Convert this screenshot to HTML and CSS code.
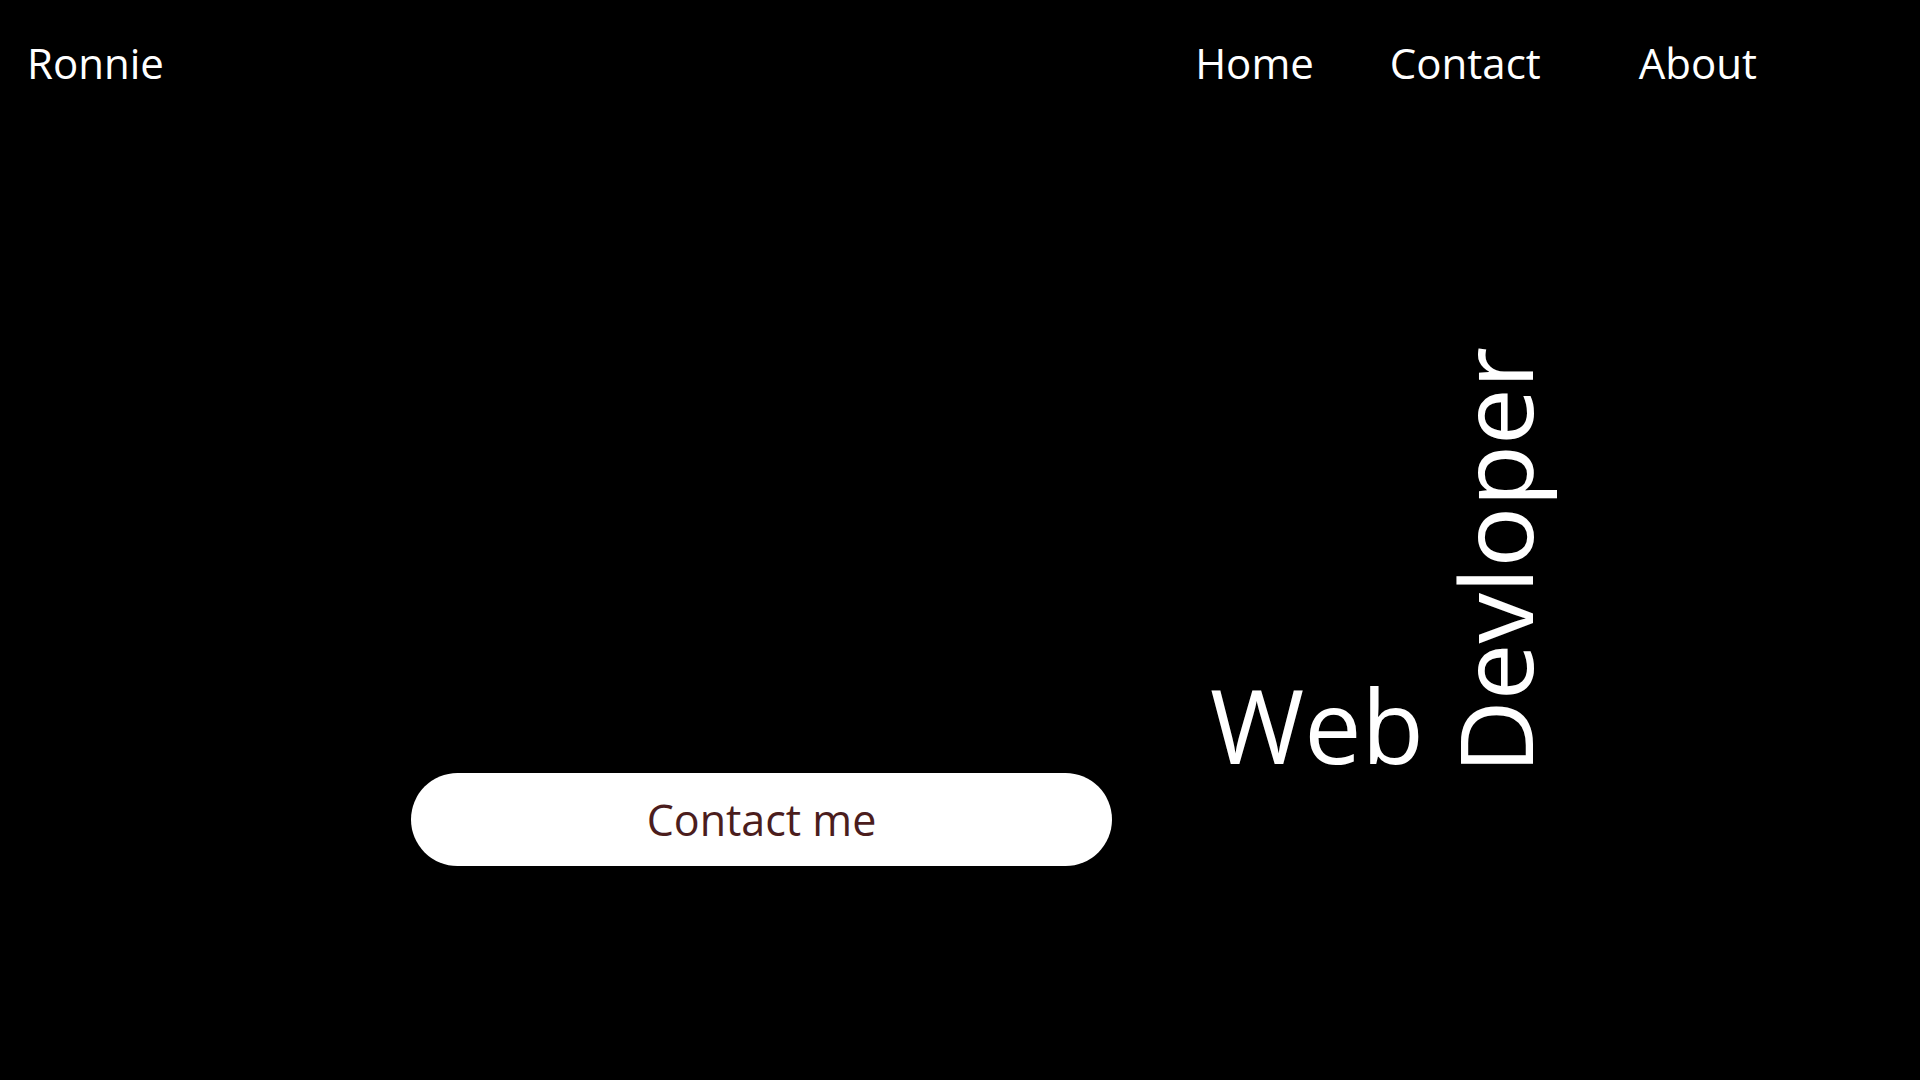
FILE: index.html
```html
<!DOCTYPE html>
<html lang="en">
<head>
<meta charset="utf-8">
<title>Ronnie</title>
<link rel="stylesheet" href="styles.css">
</head>
<body>
<header class="topbar">
  <div class="brand">Ronnie</div>
  <nav class="nav">
    <a class="nav-link" href="#">Home</a>
    <a class="nav-link" href="#">Contact</a>
    <a class="nav-link nav-link--wide" href="#">About</a>
  </nav>
</header>
<main class="hero">
  <a class="cta" href="#">Contact me</a>
  <h1 class="title">
    <span class="title-web">Web</span>
    <span class="title-dev">Devloper</span>
  </h1>
</main>
</body>
</html>
```
FILE: styles.css
```css
html, body {
  margin: 0;
  padding: 0;
  background: #000;
  color: #fff;
  font-family: "Open Sans", "Noto Sans", sans-serif;
  height: 100%;
}

.topbar {
  display: flex;
  justify-content: space-between;
  align-items: flex-start;
  padding: 42px 163px 0 27px;
  font-size: 42px;
  line-height: 1;
}

.brand {
  color: #fff;
}

.nav {
  display: flex;
  gap: 76px;
}

.nav-link {
  color: #fff;
  text-decoration: none;
}

.nav-link--wide {
  margin-left: 22px;
}

.hero {
  display: flex;
  align-items: flex-start;
  padding: 269px 0 0 411px;
}

.cta {
  margin-top: 420px;
  width: 701px;
  height: 93px;
  border-radius: 47px;
  background: #fff;
  color: #4b1d1d;
  font-size: 43px;
  display: flex;
  align-items: center;
  justify-content: center;
  text-decoration: none;
}

.title {
  margin: -6px 0 0 98px;
  display: flex;
  align-items: flex-end;
  font-weight: 400;
  font-size: 101px;
  line-height: 1;
}

.title-web {
  display: block;
  font-size: 102px;
  margin-bottom: -2px;
}

.title-dev {
  display: block;
  margin-left: 20px;
  writing-mode: vertical-rl;
  transform: rotate(180deg);
}
```
